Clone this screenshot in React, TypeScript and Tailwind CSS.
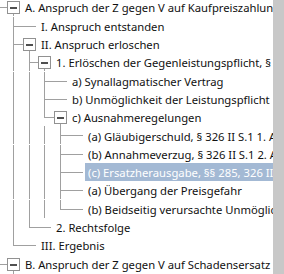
import React from "react";

type Node = { t: string; c?: Node[]; sel?: boolean };

const tree: Node[] = [
  {
    t: "A. Anspruch der Z gegen V auf Kaufpreiszahlung",
    c: [
      { t: "I. Anspruch entstanden" },
      {
        t: "II. Anspruch erloschen",
        c: [
          {
            t: "1. Erlöschen der Gegenleistungspflicht, § 326 I BGB",
            c: [
              { t: "a) Synallagmatischer Vertrag" },
              { t: "b) Unmöglichkeit der Leistungspflicht" },
              {
                t: "c) Ausnahmeregelungen",
                c: [
                  { t: "(a) Gläubigerschuld, § 326 II S.1 1. Alt." },
                  { t: "(b) Annahmeverzug, § 326 II S.1 2. Alt." },
                  { t: "(c) Ersatzherausgabe, §§ 285, 326 III", sel: true },
                  { t: "(a) Übergang der Preisgefahr" },
                  { t: "(b) Beidseitig verursachte Unmöglichkeit" },
                ],
              },
            ],
          },
          { t: "2. Rechtsfolge" },
        ],
      },
      { t: "III. Ergebnis" },
    ],
  },
  {
    t: "B. Anspruch der Z gegen V auf Schadensersatz",
    c: [{ t: "I. Schadensersatz statt der Leistung" }],
  },
];

// x of each level's connector column
const cols = [13.5, 29.5, 44.5, 60.5, 76.5];
const textX = [25, 41, 56, 72, 88];
const H = 18.3;
const MID = 9.5;

type Row = { node: Node; level: number; last: boolean; guides: boolean[] };

function flatten(nodes: Node[], level: number, guides: boolean[], out: Row[]) {
  nodes.forEach((n, i) => {
    const last = i === nodes.length - 1;
    out.push({ node: n, level, last, guides });
    if (n.c) flatten(n.c, level + 1, [...guides, !last], out);
  });
  return out;
}

const rows = flatten(tree, 0, [], []);

function Connectors({ row }: { row: Row }) {
  const { level, last, guides, node } = row;
  const c = cols[level];
  const parent = level === 0 ? -2.5 : cols[level - 1];
  const open = !!node.c;
  const stroke = "#a0a0a0";
  return (
    <svg width={textX[level]} height={H} className="shrink-0" shapeRendering="crispEdges">
      {guides.map((g, j) =>
        g && j < level - 1 ? (
          <line key={j} x1={cols[j]} y1={0} x2={cols[j]} y2={H} stroke={stroke} />
        ) : null
      )}
      {level > 0 && (
        <line x1={parent} y1={0} x2={parent} y2={last ? MID : H} stroke={stroke} />
      )}
      <line x1={parent} y1={MID} x2={open ? c - 6 : c + 6} y2={MID} stroke={stroke} />
      {open && (
        <>
          <line x1={c} y1={MID + 6} x2={c} y2={H} stroke={stroke} />
          <rect x={c - 6} y={MID - 6} width={12} height={12} fill="#fff" stroke="#919191" />
          <line x1={c - 3.5} y1={MID} x2={c + 3.5} y2={MID} stroke="#505050" strokeWidth={2} />
        </>
      )}
    </svg>
  );
}

export default function App() {
  return (
    <div className="flex w-[284px] h-[274px] overflow-hidden bg-white">
      <div className="flex-1 overflow-hidden -mt-[1.6px]">
        {rows.map((r, i) => (
          <div key={i} className="flex h-[18.3px] items-stretch">
            <Connectors row={r} />
            <div
              className={
                "flex items-center whitespace-nowrap text-[11.25px] leading-none pt-[1px] " +
                (r.node.sel ? "bg-[#a3b9d4] text-white -ml-[3px] pl-[3px] flex-1" : "text-[#111]")
              }
              style={{ fontFamily: '"Noto Sans", "Segoe UI", sans-serif' }}
            >
              {r.node.t}
            </div>
          </div>
        ))}
      </div>
      <div className="w-[11px] h-full bg-[#c8c8c8] shrink-0" />
    </div>
  );
}
